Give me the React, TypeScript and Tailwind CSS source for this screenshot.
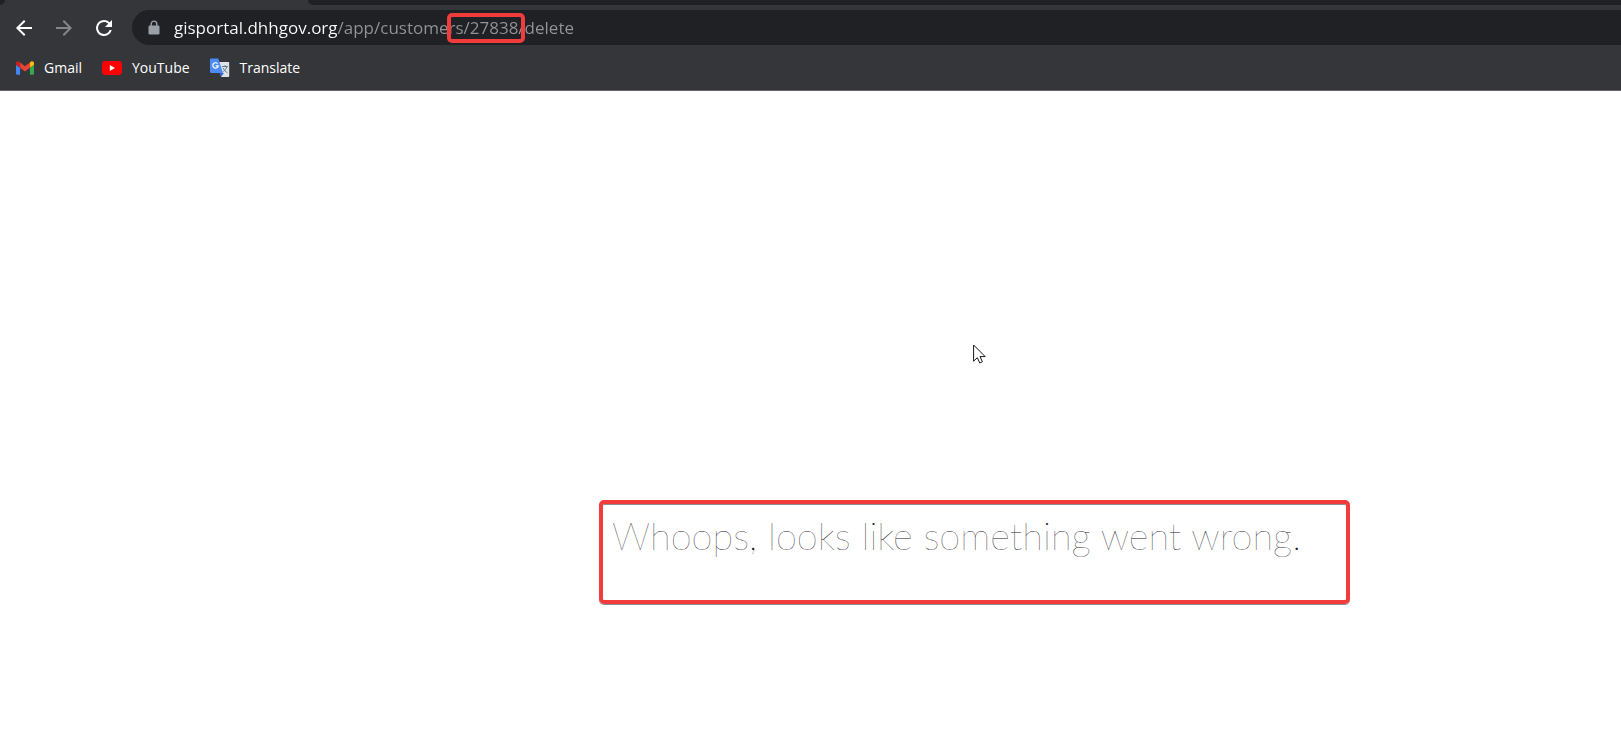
import type { ReactNode } from "react";

const URL_TEXT = "gisportal.dhhgov.org/app/customers/27838/delete";

function BackIcon({ className }: { className?: string }) {
  return (
    <svg viewBox="0 0 24 24" fill="currentColor" aria-hidden className={className}>
      <path d="M20 11H7.83l5.59-5.59L12 4l-8 8 8 8 1.41-1.41L7.83 13H20z" />
    </svg>
  );
}

function ReloadIcon() {
  return (
    <svg viewBox="0 0 24 24" fill="currentColor" aria-hidden className="size-6">
      <path d="M17.65 6.35A7.96 7.96 0 0 0 12 4a8 8 0 1 0 7.73 10h-2.08A6 6 0 1 1 12 6c1.66 0 3.14.69 4.22 1.78L13 11h7V4z" />
    </svg>
  );
}

function LockIcon() {
  return (
    <svg viewBox="0 0 12 15" aria-hidden className="h-[15px] w-3 shrink-0 text-[#9aa0a6]">
      <rect x="0.5" y="5.5" width="11" height="9" rx="1.2" fill="currentColor" />
      <path d="M3.2 6V3.9a2.8 2.8 0 0 1 5.6 0V6" fill="none" stroke="currentColor" strokeWidth="1.4" />
    </svg>
  );
}

function GmailIcon() {
  return (
    <svg viewBox="52 42 88 66" aria-hidden className="h-[14px] w-[18px]">
      <path fill="#4285f4" d="M58 108h14V74L52 59v43c0 3.32 2.69 6 6 6" />
      <path fill="#34a853" d="M120 108h14c3.32 0 6-2.69 6-6V59l-20 15" />
      <path fill="#fbbc04" d="M120 48v26l20-15v-8c0-7.42-8.47-11.65-14.4-7.2" />
      <path fill="#ea4335" d="M72 74V48l24 18 24-18v26L96 92" />
      <path fill="#c5221f" d="M52 51v8l20 15V48l-5.6-4.2c-5.94-4.45-14.4-.22-14.4 7.2" />
    </svg>
  );
}

function YouTubeIcon() {
  return (
    <svg viewBox="0 0 20 14" aria-hidden className="h-[14px] w-5">
      <rect width="20" height="14" rx="3.4" fill="#f00" />
      <path d="M7.8 4v6l5.2-3z" fill="#fff" />
    </svg>
  );
}

function TranslateIcon() {
  return (
    <svg viewBox="0 0 20 20" aria-hidden className="size-5">
      <path d="M8 4h10.2c.6 0 1 .4 1 1v13c0 .6-.4 1-1 1h-7z" fill="#dfe1e5" />
      <path d="M11 19l3-4h-4.3z" fill="#3367d6" />
      <path d="M1.2.5h7.1L13 15H1.2C.5 15 0 14.5 0 13.800V1.700C0 1 .5.5 1.200.5" fill="#4c8bf5" />
      <path d="M7.600 5.700A2.700 2.700 0 1 0 8.200 7.800H5.700" fill="none" stroke="#fff" strokeWidth="1.2" />
      <path d="M12 8.500h6M15 7.200v1.300M16.700 8.500c-.4 2.400-1.800 4-3.400 5M13.300 10c.8 2 2.200 3.600 4.200 4.800" fill="none" stroke="#607d8b" strokeWidth="1" />
    </svg>
  );
}

function Bookmark({ href, icon, label }: { href: string; icon: ReactNode; label: string }) {
  return (
    <a href={href} className="flex items-center gap-2.5">
      {icon}
      <span>{label}</span>
    </a>
  );
}

function BrowserChrome() {
  return (
    <header className="border-b border-[#66676b] bg-[#35363a] text-white">
      {/* Bottom edge of the tab strip */}
      <div className="flex h-[5px]">
        <div className="w-[5px] rounded-br-full bg-[#202124]" />
        <div className="w-[303px]" />
        <div className="flex-1 rounded-bl-lg bg-[#202124]" />
      </div>

      <div className="flex items-center pt-[5px] pl-3">
        <div className="flex items-center gap-4 pr-4">
          <button type="button" aria-label="Back">
            <BackIcon className="size-6" />
          </button>
          <button type="button" aria-label="Forward" disabled className="text-[#85868a]">
            <BackIcon className="size-6 rotate-180" />
          </button>
          <button type="button" aria-label="Reload">
            <ReloadIcon />
          </button>
        </div>
        <div className="flex h-[35px] flex-1 items-center gap-3.5 rounded-l-full bg-[#202124] pl-4">
          <LockIcon />
          <div className="relative flex-1">
            <input
              type="text"
              aria-label="Address and search bar"
              defaultValue={URL_TEXT}
              spellCheck={false}
              className="block w-full bg-[linear-gradient(90deg,#fff_163px,#929498_163px)] bg-clip-text text-[17px] leading-6 text-transparent outline-none"
            />
            {/* Marks the record id in the address */}
            <div className="pointer-events-none absolute -top-[3px] left-[273px] h-[30px] w-[78px] rounded-[5px] border-4 border-[#f23b3b]" />
          </div>
        </div>
      </div>

      <nav aria-label="Bookmarks" className="flex h-[45px] items-center gap-5 pl-4 text-sm">
        <Bookmark href="#gmail" icon={<GmailIcon />} label="Gmail" />
        <Bookmark href="#youtube" icon={<YouTubeIcon />} label="YouTube" />
        <Bookmark href="#translate" icon={<TranslateIcon />} label="Translate" />
      </nav>
    </header>
  );
}

function Cursor() {
  return (
    <svg
      viewBox="0 0 13 20"
      aria-hidden
      className="pointer-events-none absolute top-[344px] left-[973px] h-5 w-[13px]"
    >
      <path
        d="M.6 1v16.200l3.700-3.500 2.500 5.300 2.600-1.200-2.400-5.200h5.200z"
        fill="#fff"
        stroke="#15151f"
        strokeWidth="1"
      />
    </svg>
  );
}

export default function App() {
  return (
    <div className="relative min-h-screen overflow-hidden bg-white font-['Open_Sans','Noto_Sans',sans-serif]">
      <BrowserChrome />
      <main className="flex justify-center pt-[409px] pl-[328px]">
        <div className="h-[104px] w-[751px] rounded-[5px] border-4 border-[#f23b3b] px-[9px] pt-[7px] shadow-[0_1px_0_#8a8f94,inset_0_1px_0_#8a8f94]">
          <h1 className="font-['Lato',sans-serif] text-[38px] leading-[48px] font-thin whitespace-nowrap text-[#1b2026]">
            Whoops, looks like something went wrong.
          </h1>
        </div>
      </main>
      <Cursor />
    </div>
  );
}
